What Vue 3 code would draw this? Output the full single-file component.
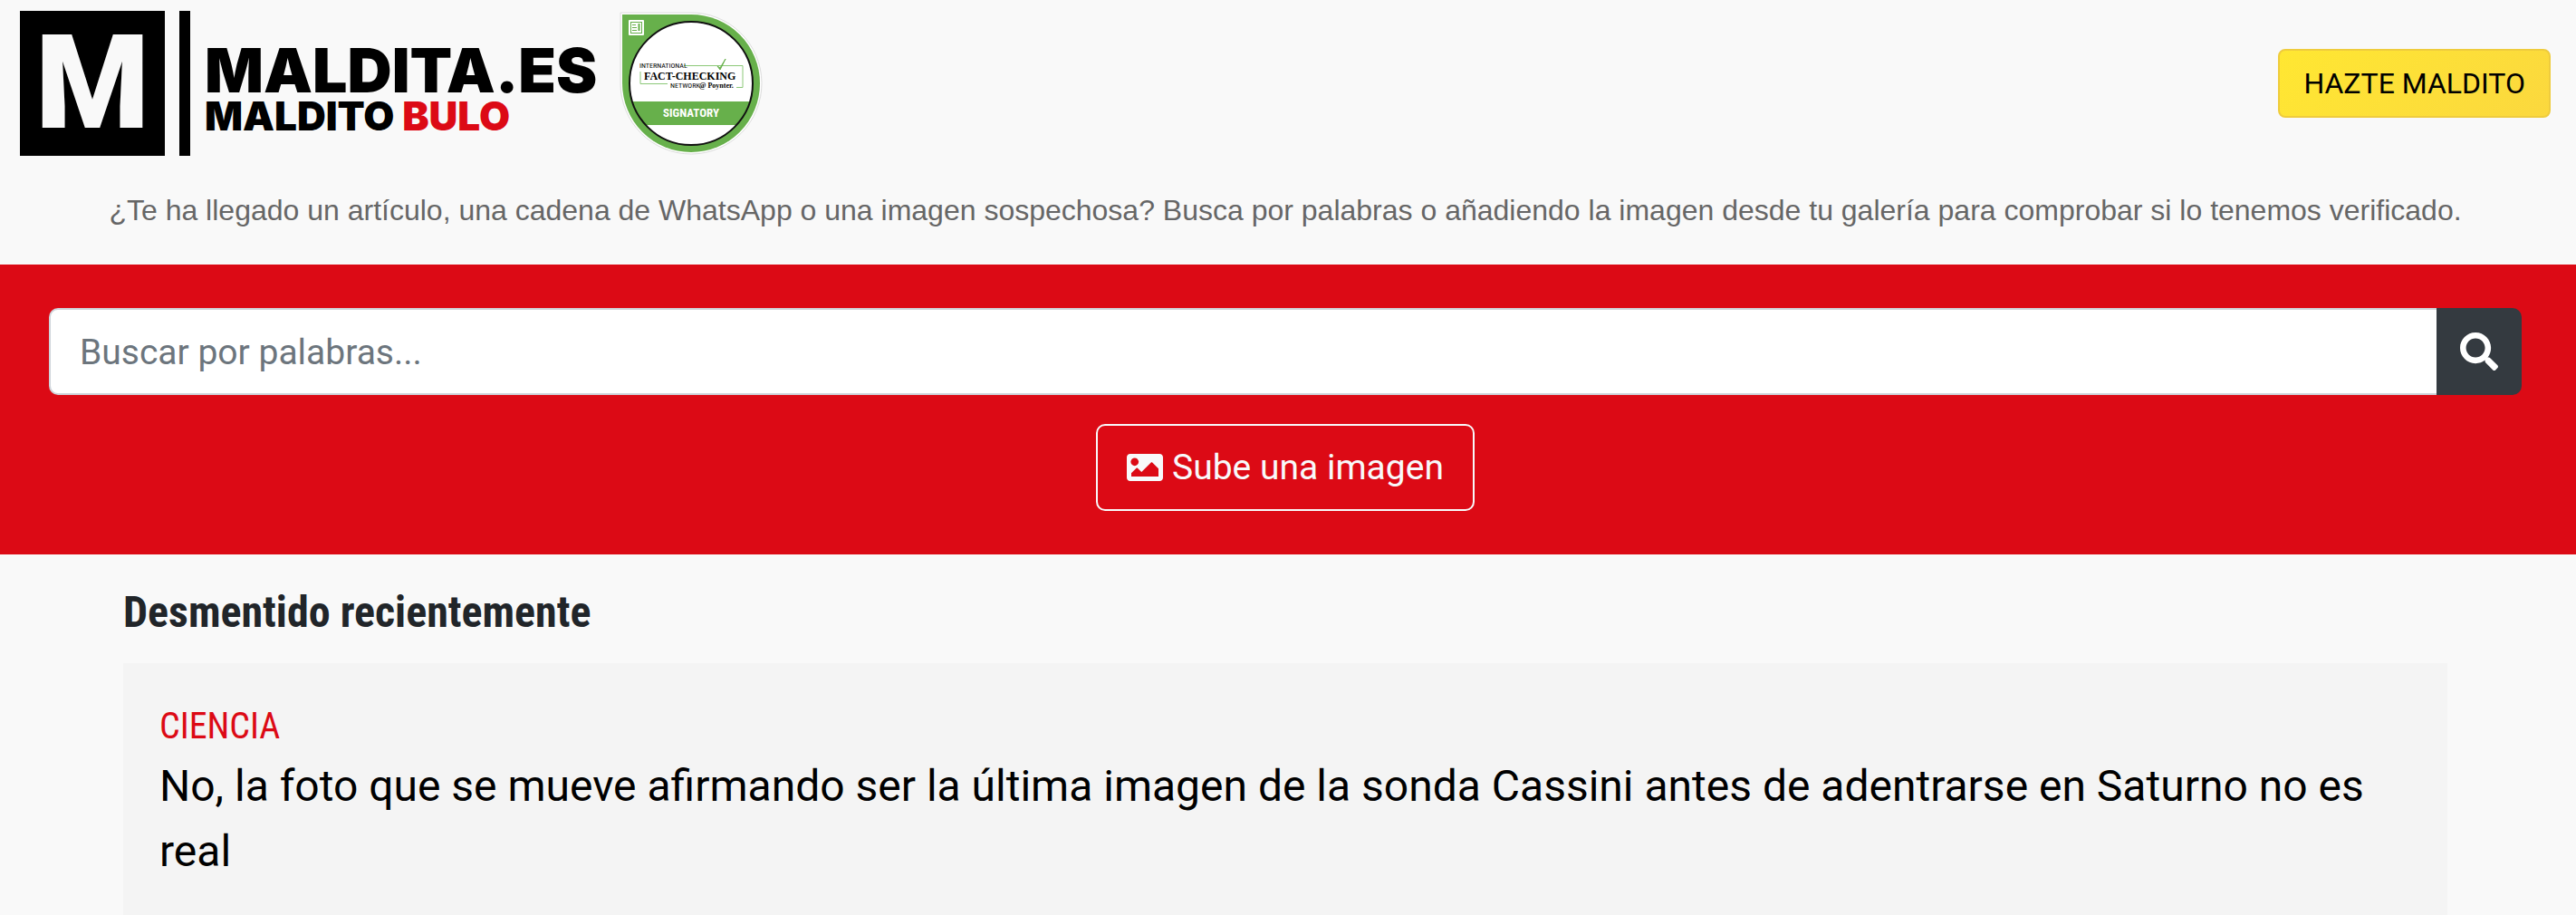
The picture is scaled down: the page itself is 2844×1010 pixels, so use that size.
<template>
  <div class="page">
    <header class="header">
      <a href="#" class="brand">
        <span class="brand_mark">M</span>
        <span class="brand_bar"></span>
        <span class="brand_text">
          <span class="brand_name">MALDITA.ES</span>
          <span class="brand_section">MALDITO <span class="brand_red">BULO</span></span>
        </span>
      </a>

      <a href="#" class="badge" aria-label="International Fact-Checking Network">
        <svg viewBox="0 0 160 160" width="160" height="160">
          <path d="M2 2H79A78 78 0 1 1 2 80Z" fill="#fff" stroke="#dcdcdc" stroke-width="1" />
          <path d="M4 4H80A76 76 0 1 1 4 80Z" fill="#67b04b" />
          <circle cx="80" cy="80" r="68" fill="#fff" />
          <path d="M15 100H145A68 68 0 0 1 130 126H30A68 68 0 0 1 15 100Z" fill="#67b04b" />
          <circle cx="80" cy="80" r="68" fill="none" stroke="#111" stroke-width="2" />
          <!-- newspaper in the corner -->
          <rect x="11" y="10" width="17" height="17" rx="1" fill="#fff" />
          <g fill="none" stroke="#67b04b">
            <rect x="13.500" y="12.500" width="12" height="12" />
            <path d="M15 15.500H19M15 18.500H20M15 21.500H20" />
            <path d="M22.500 14V22" stroke-width="2" />
          </g>
          <path d="M72 60.500H137V84.500H130M24 67V80.500H54" fill="none" stroke="#8cc878" />
          <path d="M109 61L112 65L118 53L112 63Z" fill="#67b04b" stroke="#67b04b" />
          <text x="23" y="63" class="badge_small">INTERNATIONAL</text>
          <text x="28" y="76" class="badge_title">FACT-CHECKING</text>
          <text x="57" y="85" class="badge_small">NETWORK</text>
          <text x="89" y="85" class="badge_serif">@ Poynter.</text>
          <text x="80" y="117" text-anchor="middle" class="badge_signatory">SIGNATORY</text>
        </svg>
      </a>

      <button type="button" class="join_btn">HAZTE MALDITO</button>
    </header>

    <p class="intro">
      ¿Te ha llegado un artículo, una cadena de WhatsApp o una imagen sospechosa? Busca por palabras o añadiendo la imagen desde tu galería para comprobar si lo tenemos verificado.
    </p>

    <section class="search">
      <form class="search_form" @submit.prevent="search">
        <input
          v-model="query"
          type="text"
          class="search_input"
          placeholder="Buscar por palabras..."
          aria-label="Buscar por palabras"
        />
        <button type="submit" class="search_btn" aria-label="Buscar">
          <svg viewBox="0 0 512 512" width="42" height="42" fill="currentColor">
            <path d="M505 442.700L405.300 343c-4.500-4.500-10.600-7-17-7H372c27.600-35.300 44-79.700 44-128C416 93.100 322.900 0 208 0S0 93.100 0 208s93.100 208 208 208c48.300 0 92.700-16.400 128-44v16.300c0 6.400 2.500 12.500 7 17l99.700 99.700c9.400 9.400 24.600 9.400 33.900 0l28.300-28.300c9.400-9.400 9.400-24.600.1-34zM208 336c-70.700 0-128-57.200-128-128 0-70.700 57.200-128 128-128 70.700 0 128 57.200 128 128 0 70.700-57.200 128-128 128z" />
          </svg>
        </button>
      </form>

      <input ref="fileInput" type="file" accept="image/*" hidden />
      <button type="button" class="upload_btn" @click="fileInput.click()">
        <svg viewBox="0 64 512 384" width="40" height="30" fill="currentColor">
          <path d="M464 448H48c-26.500 0-48-21.500-48-48V112c0-26.500 21.500-48 48-48h416c26.500 0 48 21.500 48 48v288c0 26.500-21.500 48-48 48zM112 120c-30.900 0-56 25.100-56 56s25.100 56 56 56 56-25.100 56-56-25.100-56-56-56zM64 384h384V272l-87.500-87.500c-4.700-4.700-12.300-4.700-17 0L208 320l-55.500-55.500c-4.700-4.700-12.300-4.700-17 0L64 336v48z" />
        </svg>
        Sube una imagen
      </button>
    </section>

    <main class="recent">
      <h2 class="recent_title">Desmentido recientemente</h2>
      <article v-for="item in articles" :key="item.title" class="card">
        <p class="card_topic">{{ item.topic }}</p>
        <a href="#" class="card_title">{{ item.title }}</a>
      </article>
    </main>
  </div>
</template>

<script setup>
import { ref } from "vue";

const query = ref("");
const fileInput = ref(null);

const articles = ref([
  {
    topic: "CIENCIA",
    title: "No, la foto que se mueve afirmando ser la última imagen de la sonda Cassini antes de adentrarse en Saturno no es real",
  },
]);

// trim the query before it is used
function search() {
  query.value = query.value.trim();
}
</script>

<style>
body {
  margin: 0;
  background: #f9f9f9;
}
</style>

<style scoped>
.page {
  font-family: Roboto, "Liberation Sans", sans-serif;
  font-size: 32px;
  color: #212529;
}

.header {
  display: flex;
  align-items: center;
  height: 184px;
  padding: 0 28px 0 22px;
}

.brand {
  display: flex;
  align-items: center;
  color: #000;
  font-family: Inter, sans-serif;
  font-weight: 900;
  text-decoration: none;
}

.brand_mark {
  width: 160px;
  height: 160px;
  background: #000;
  color: #f9f9f9;
  font-family: Roboto, sans-serif;
  font-size: 144px;
  line-height: 160px;
  text-align: center;
}

.brand_bar {
  width: 12px;
  height: 160px;
  margin: 0 16px;
  background: #000;
}

.brand_text {
  display: flex;
  flex-direction: column;
  padding-top: 12px;
}

.brand_name {
  font-size: 68px;
  line-height: 60px;
}

.brand_section {
  font-size: 44px;
  line-height: 42px;
}

.brand_red {
  color: #dc0a15;
}

.badge {
  height: 160px;
  margin-left: 24px;
}

.badge svg {
  display: block;
}

.badge_small {
  font: 8px "Roboto Condensed", Roboto, sans-serif;
}

.badge_title {
  font: bold 12px "Liberation Serif", serif;
}

.badge_serif {
  font: bold 8px "Liberation Serif", serif;
}

.badge_signatory {
  font: bold 13px "Roboto Condensed", Roboto, sans-serif;
  fill: #fff;
}

.join_btn {
  margin-left: auto;
  padding: 0 26px;
  height: 76px;
  border: 2px solid #efcc3d;
  border-radius: 8px;
  background: linear-gradient(135deg, #ffe732, #fbd83e);
  color: #000;
  font: inherit;
  cursor: pointer;
}

.intro {
  margin: 0;
  padding: 24px 60px 36px 54px;
  color: #666;
  font-family: "Liberation Sans", Arial, sans-serif;
  line-height: 48px;
  text-align: center;
}

.search {
  display: flex;
  flex-direction: column;
  align-items: center;
  gap: 32px;
  padding: 48px 60px 48px 54px;
  background: #dc0a15;
}

.search_form {
  display: flex;
  width: 100%;
}

.search_input {
  flex: 1;
  min-width: 0;
  height: 96px;
  box-sizing: border-box;
  padding: 2px 32px 0;
  border: 2px solid #ced4da;
  border-right: 0;
  border-radius: 10px 0 0 10px;
  background: #fff;
  font: inherit;
  font-size: 39px;
}

.search_input::placeholder {
  color: #6c757d;
  opacity: 1;
}

.search_btn {
  display: flex;
  align-items: center;
  justify-content: center;
  width: 94px;
  padding: 0;
  border: 0;
  border-radius: 0 10px 10px 0;
  background: #343a40;
  color: #fff;
  cursor: pointer;
}

.upload_btn {
  display: flex;
  align-items: center;
  gap: 10px;
  height: 96px;
  padding: 0 32px;
  border: 2px solid #f8f9fa;
  border-radius: 10px;
  background: none;
  color: #f8f9fa;
  font: inherit;
  font-size: 39px;
  cursor: pointer;
}

.recent {
  padding: 36px 142px 0 136px;
}

.recent_title {
  margin: 0 0 28px;
  font-family: "Roboto Condensed", Roboto, sans-serif;
  font-size: 48px;
  line-height: 56px;
}

.card {
  padding: 40px 40px 34px;
  background: #f4f4f4;
}

.card_topic {
  margin: 0;
  color: #dc0a15;
  font-family: "Roboto Condensed", Roboto, sans-serif;
  font-size: 40px;
  line-height: 60px;
}

.card_title {
  display: block;
  color: #000;
  font-size: 48px;
  line-height: 72px;
  text-decoration: none;
}
</style>
